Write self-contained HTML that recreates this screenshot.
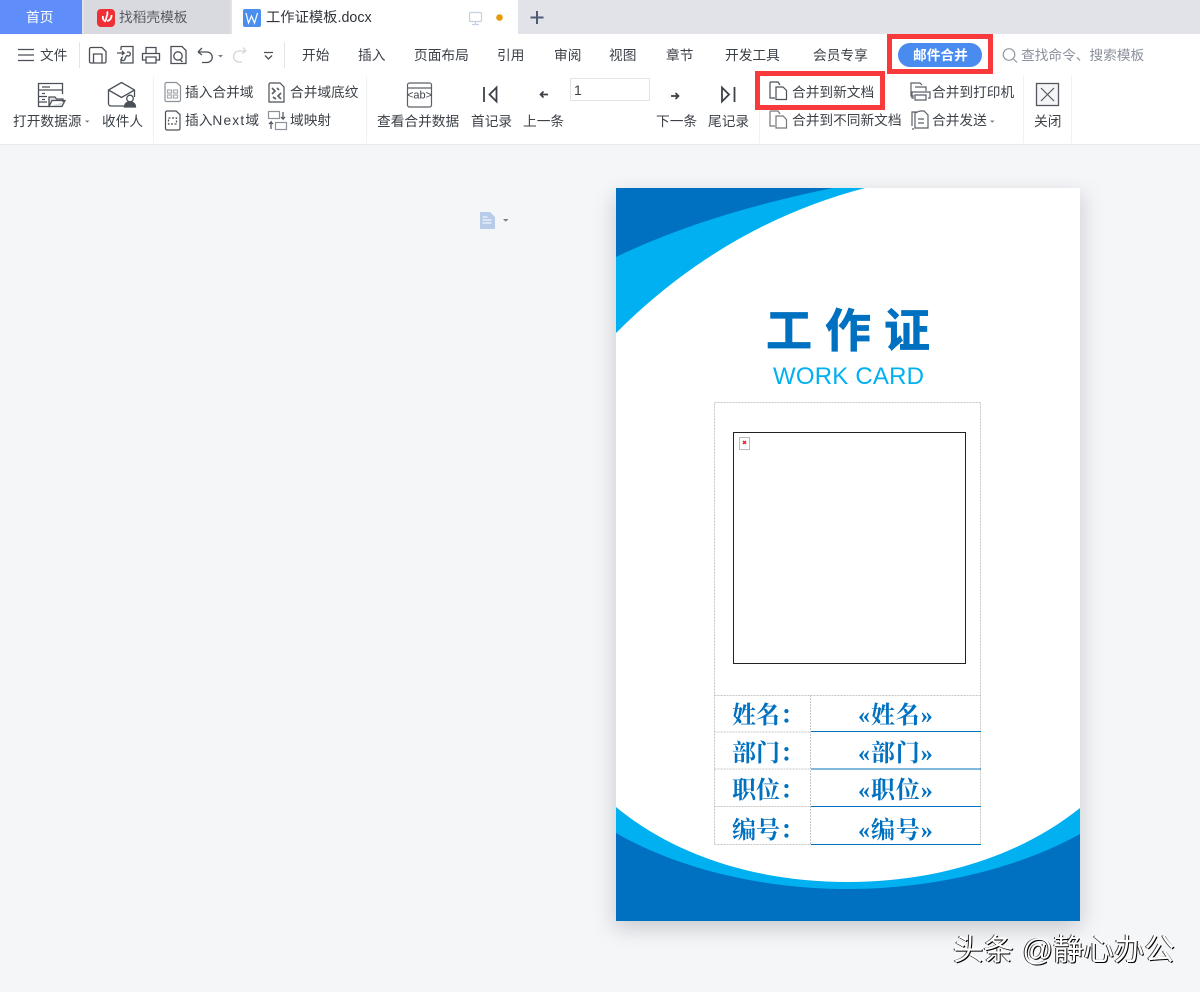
<!DOCTYPE html>
<html lang="zh"><head><meta charset="utf-8"><title>工作证模板</title>
<style>
html,body{margin:0;padding:0}
body{width:1200px;height:992px;position:relative;overflow:hidden;background:#f5f6f8;font-family:"Liberation Sans","Noto Sans CJK SC",sans-serif;color:#3c4148;font-size:13.7px}
.a{position:absolute;white-space:nowrap;line-height:18px}
.box{position:absolute;box-sizing:border-box}
.tb{position:absolute;left:0;top:34px;width:1200px;height:111px;background:#fff;border-bottom:1px solid #e8e9ec;box-sizing:border-box}
.sep{position:absolute;width:1px;background:#f0f1f3}
svg{position:absolute;left:0;top:0}
.lb,.val{position:absolute;font-family:"Liberation Serif","Noto Serif CJK SC",serif;font-weight:700;font-size:24px;color:#0070c0;line-height:32px;white-space:nowrap}
.val{letter-spacing:.9px}
</style></head><body>
<div class="box" style="left:0;top:0;width:1200px;height:34px;background:#e2e3e8"></div>
<div class="box" style="left:0;top:0;width:82px;height:34px;background:#5f8dfa"></div>
<div class="box" style="left:84px;top:0;width:146px;height:34px;background:#d9dadf"></div>
<div class="box" style="left:232px;top:0;width:286px;height:34px;background:#fff"></div>
<div class="a" style="left:26px;top:9px;color:#fff">首页</div>
<div class="a" style="left:119px;top:9px;color:#555a62">找稻壳模板</div>
<div class="a" style="left:266px;top:9px;font-size:14.300px;color:#30343a">工作证模板.docx</div>
<div class="tb"></div>
<div class="sep" style="left:79px;top:42px;height:26px;background:#e3e4e7"></div>
<div class="sep" style="left:284px;top:42px;height:26px;background:#e3e4e7"></div>
<div class="sep" style="left:153px;top:76px;height:67px"></div>
<div class="sep" style="left:366px;top:76px;height:67px"></div>
<div class="sep" style="left:759px;top:76px;height:67px"></div>
<div class="sep" style="left:1023px;top:76px;height:67px"></div>
<div class="sep" style="left:1071px;top:76px;height:67px"></div>

<div class="a" style="left:40px;top:47px">文件</div>
<div class="a" style="left:302px;top:47px">开始</div>
<div class="a" style="left:358px;top:47px">插入</div>
<div class="a" style="left:414px;top:47px">页面布局</div>
<div class="a" style="left:497px;top:47px">引用</div>
<div class="a" style="left:554px;top:47px">审阅</div>
<div class="a" style="left:609px;top:47px">视图</div>
<div class="a" style="left:666px;top:47px">章节</div>
<div class="a" style="left:725px;top:47px">开发工具</div>
<div class="a" style="left:813px;top:47px">会员专享</div>
<div class="box" style="left:898px;top:43px;width:84px;height:24px;border-radius:12px;background:#4a8bef"></div>
<div class="a" style="left:913px;top:47px;color:#fff;font-weight:700">邮件合并</div>
<div class="a" style="left:1021px;top:47px;color:#8b919c">查找命令、搜索模板</div>

<div class="a" style="left:13px;top:113px">打开数据源</div>
<div class="a" style="left:102px;top:113px">收件人</div>
<div class="a" style="left:185px;top:84px">插入合并域</div>
<div class="a" style="left:185px;top:112px">插入<span style="letter-spacing:1.200px">Next</span>域</div>
<div class="a" style="left:290px;top:84px">合并域底纹</div>
<div class="a" style="left:290px;top:112px">域映射</div>
<div class="a" style="left:377px;top:113px">查看合并数据</div>
<div class="a" style="left:471px;top:113px">首记录</div>
<div class="a" style="left:523px;top:113px">上一条</div>
<div class="a" style="left:656px;top:113px">下一条</div>
<div class="a" style="left:708px;top:113px">尾记录</div>
<div class="box" style="left:570px;top:78px;width:80px;height:23px;border:1px solid #e2e3e6;background:#fff"></div>
<div class="a" style="left:574px;top:81px;font-size:14px">1</div>
<div class="a" style="left:792px;top:84px">合并到新文档</div>
<div class="a" style="left:792px;top:112px">合并到不同新文档</div>
<div class="a" style="left:932px;top:84px">合并到打印机</div>
<div class="a" style="left:932px;top:112px">合并发送</div>
<div class="a" style="left:1034px;top:113px">关闭</div>

<div class="box" style="left:887px;top:34px;width:106px;height:40px;border:5px solid #f93a3c"></div>
<div class="box" style="left:755px;top:71px;width:130px;height:39px;border:5px solid #f93a3c"></div>

<!-- page -->
<div class="box" style="left:616px;top:188px;width:464px;height:733px;background:#fff;box-shadow:-5px 9px 18px rgba(120,125,135,.2),6px 5px 18px rgba(120,125,135,.18)"></div>
<svg width="1200" height="992" viewBox="0 0 1200 992">
<!-- card art -->
<path d="M616 188H865Q724 225 616 333Z" fill="#00b0f0"/>
<path d="M616 188H833Q705 214 616 257Z" fill="#0070c0"/>
<path d="M616 807C680 860 765 882 848 882C930 882 1015 860 1080 808V921H616Z" fill="#00b0f0"/>
<path d="M616 833C680 870 765 889 848 889C930 889 1015 870 1080 834V921H616Z" fill="#0070c0"/>
<!-- table -->
<g fill="none" stroke="#c6c6c6" stroke-width="1" stroke-dasharray="2 1">
<path d="M714.5 402.5H980.5V844.5H714.5Z"/>
<path d="M714.5 695.5H980.5M714.5 732H810M714.5 769H810M714.5 806.5H810M810.5 695V844"/>
</g>
<g stroke="#0070c0" stroke-width="1" fill="none"><path d="M811 731.5H981M811 769H981M811 806.5H981M811 844.5H981"/></g>
<rect x="733.5" y="432.5" width="232" height="231" fill="#fff" stroke="#222" stroke-width="1"/>
<rect x="739.5" y="437.5" width="10" height="12" fill="#fff" stroke="#bbb"/>
<path d="M743 441l3 3M746 441l-3 3" stroke="#f01c24" stroke-width="1.500"/>

<!-- tabs icons -->
<rect x="97" y="9" width="18" height="18" rx="4" fill="#ee2f36"/>
<path d="M107 11.5c2 3-2 6-.8 9M103 16c-.8 3 1 5 3 5.500M111.500 15c.3 3-1.500 5.500-4.500 6" stroke="#fff" stroke-width="1.800" fill="none"/>
<rect x="243" y="9" width="18" height="18" rx="2" fill="#4a8fee"/>
<path d="M246 13l2.500 10 3-7 3 7 3-10" fill="none" stroke="#fff" stroke-width="1.200"/>
<g fill="none" stroke="#c5d0e0" stroke-width="1.200"><rect x="469.500" y="12.500" width="12" height="9" rx="1"/><path d="M475.500 22v2M472 24.500h7"/></g>
<circle cx="499.500" cy="17.500" r="3.300" fill="#e79b0c"/>
<path d="M530.500 17.500h13M537 11v13" stroke="#4f5b73" stroke-width="2" fill="none"/>

<g fill="none" stroke="#4a4f58" stroke-width="1.300">
<!-- hamburger -->
<path d="M18 49.500H34M18 55H34M18 60.500H34"/>
<!-- save -->
<path d="M91 47.500h11l4 4v10a1.500 1.500 0 0 1-1.500 1.500H91a1.500 1.500 0 0 1-1.500-1.500V49a1.500 1.500 0 0 1 1.500-1.500ZM93.500 63V54H102V63"/>
<!-- export -->
<path d="M121 46.500h12v16.500h-12v-4M121 50v-3.500M117 53h7l-2-2M124 53l-2 2M127 52.500a2 2 0 1 1 0 3c-1.500 1-1 2-2 3a1.800 1.800 0 1 1-2-1.500"/>
<!-- print -->
<path d="M146 53v-5.500h10V53M145.500 60h-3V53.500h17V60H156.500M146 57h10v6h-10z"/>
<!-- preview -->
<path d="M171 46.500h11l4 4v13h-15zM182.500 62l-2.500-2.500"/><circle cx="178" cy="56" r="4.200"/>
<!-- undo/redo -->
<path d="M198 52l4-4M198 52l4 3M198 52h9a5 5 0 0 1 0 10.500h-5"/>
<path d="M246 51l-3-3.500M246 51l-4 2.500M246 51h-7a5 5 0 0 0 0 11h3" stroke="#d3d5d9"/>
<path d="M264 52.500h9M265 55.500l3.500 3.500 3.500-3.500"/>
<!-- open data -->
<path d="M50 106.500H38.500V83.500H62.500V94M38.500 90H62.500M38.500 96.500H47M38.500 102H47M42 87h8M42 93.500h3M42 99.500h3"/>
<path d="M49 106.500V97h6l1.500 2H63v3M49 106.500H62L65 100.500H52Z" fill="#dfe1e4"/>
<!-- recipient -->
<path d="M124 106H111a2.500 2.500 0 0 1-2.500-2.500V90L121.500 82.500 134.500 90V97M108.500 90l13 7.500 13-7.500"/>
<circle cx="130" cy="98.500" r="3.300"/><path d="M124.500 107c0-7 11-7 11 0z" fill="#4a4f58"/>
</g>

<g fill="none" stroke="#5a5f68" stroke-width="1.200">
<!-- small doc icons -->
<path d="M166.500 82.500h10l4 3.500v14a1.500 1.500 0 0 1-1.500 1.500h-12.500a1.500 1.500 0 0 1-1.500-1.500V84a1.500 1.500 0 0 1 1.500-1.500z" stroke="#8d929a"/>
<g stroke="#a8acb3"><rect x="167.500" y="90" width="4" height="3"/><rect x="173.500" y="90" width="4" height="3"/><rect x="167.500" y="95" width="4" height="3"/><rect x="173.500" y="95" width="4" height="3"/></g>
<path d="M167 111h9l4 3.500v14a1.500 1.500 0 0 1-1.500 1.500h-11.500a1.500 1.500 0 0 1-1.500-1.500V112.500a1.500 1.500 0 0 1 1.500-1.500z" stroke="#4a4f58"/><rect x="168.500" y="118" width="8" height="6" stroke-dasharray="2 1.500" stroke="#4a4f58"/>
<path d="M270 83h10l4 4v15h-15v-18z" stroke="#4a4f58"/>
<path d="M272 88l3 3-3 3M281 93l-3 3 3 3M277 88l2 2M273 97l3 2" stroke-width="1.700"/>
<!-- domain map -->
<rect x="268.500" y="111.500" width="11" height="7" stroke="#8d929a"/><rect x="275.500" y="122.500" width="11" height="7" stroke="#8d929a"/>
<path d="M283 112v7l-2-2M283 119l2-2M271 129v-7l-2 2M271 122l2 2" stroke="#4a4f58"/>
<!-- ab -->
<path d="M407.500 85a2 2 0 0 1 2-2h20a2 2 0 0 1 2 2v20a2 2 0 0 1-2 2h-20a2 2 0 0 1-2-2zM407.500 88h24"/>
<!-- nav -->
<path d="M484 87v15M489.500 94.500l7-7v14z" stroke="#3c4148" stroke-width="1.800"/>
<path d="M548 94.500h-7.500M543.500 91.500l-3 3 3 3" stroke="#3c4148" stroke-width="1.700"/>
<path d="M671 96h7.500M675.500 93l3 3-3 3" stroke="#3c4148" stroke-width="1.700"/>
<path d="M734.500 87v15M729 94.500l-7-7v14z" stroke="#3c4148" stroke-width="1.800"/>
<!-- merge new doc -->
<path d="M775 98h-5V83a1 1 0 0 1 1-1h7l2 3" stroke="#4a4f58"/><path d="M776 87h7l3.500 3.500V99.500h-10.500z" stroke="#4a4f58"/>
<path d="M775 126h-5V112a1 1 0 0 1 1-1h7l2 3" stroke="#777"/><path d="M776 116h7l3.500 3.500V128h-10.500z" stroke="#777"/>
<!-- merge printer -->
<path d="M914 96h-3V83h9l2 2M915 87h11v4M914 98h-2V92h18v6h-2M915 95h11v5h-11z"/>
<!-- merge send -->
<path d="M917 112h-5v14M912 129h2M920 111h4l4 4v13h-13V113zM918 119h6M918 123h6"/>
<!-- close -->
<rect x="1036.500" y="83.500" width="22" height="22" fill="#f4f5f6" stroke="#55595f" stroke-width="1.300"/>
<path d="M1041 88l13 13M1054 88l-13 13" stroke="#55595f"/>
<!-- search -->
<circle cx="1009" cy="54.500" r="5.800" stroke="#9299a5"/><path d="M1013.500 59l3.500 3.500" stroke="#9299a5"/>
</g>
<text x="419.500" y="98.500" text-anchor="middle" font-family="Liberation Sans" font-size="11" fill="#3c4148">&lt;ab&gt;</text>
<!-- carets -->
<path d="M218 55h5l-2.500 2.500zM85 120.500h4.500l-2.250 2.250zM990 120.500h4.500l-2.250 2.250zM503 219h5.500l-2.750 2.750z" fill="#7b8088"/>
<!-- page marker -->
<path d="M480 212h10l5 5v12h-15z" fill="#b8cbe9"/>
<path d="M482.500 217h5M482.500 220h9M482.500 223h9" stroke="#fff" stroke-width="1"/>
</svg>
<div class="a" style="left:766px;top:301px;font-size:46px;line-height:60px;letter-spacing:13px;font-weight:700;color:#0070c0;-webkit-text-stroke:.7px #0070c0">工作证</div>
<div class="a" style="left:773px;top:362px;font-size:24px;line-height:30px;letter-spacing:.2px;color:#00b0f0">WORK CARD</div>
<div class="lb" style="left:732px;top:700px">姓名：</div>
<div class="lb" style="left:732px;top:738px">部门：</div>
<div class="lb" style="left:732px;top:775px">职位：</div>
<div class="lb" style="left:732px;top:815px">编号：</div>
<div class="val" style="left:858px;top:700px">«姓名»</div>
<div class="val" style="left:858px;top:738px">«部门»</div>
<div class="val" style="left:858px;top:775px">«职位»</div>
<div class="val" style="left:858px;top:815px">«编号»</div>
<div class="a" style="left:953px;top:931px;font-size:30.400px;line-height:38px;color:#fff;text-shadow:1px 1px 0 #000,-1px 0 0 #333">头条 @静心办公</div>
</body></html>
